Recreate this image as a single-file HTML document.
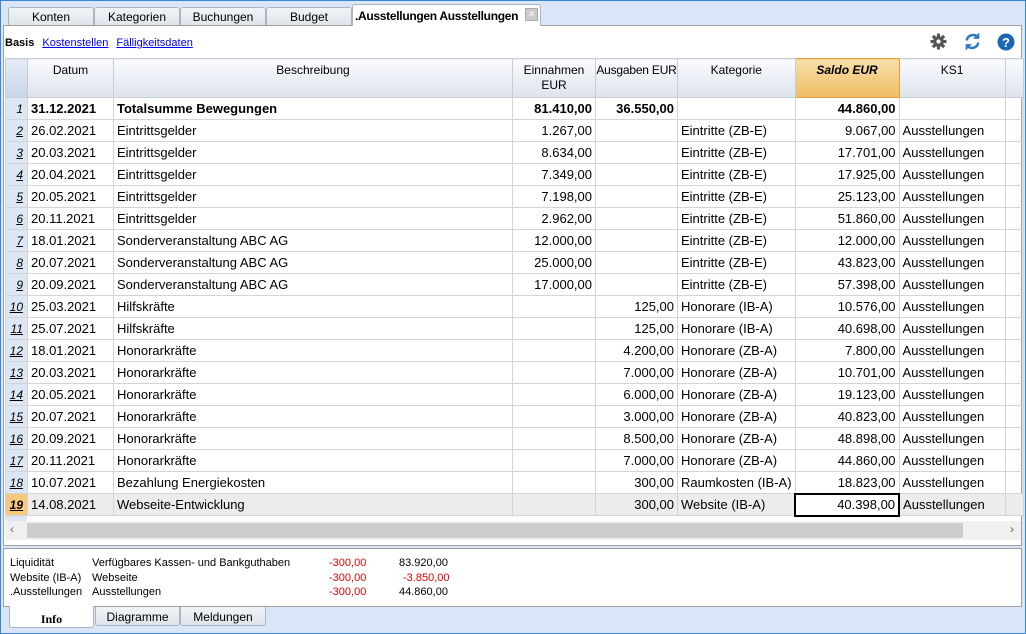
<!DOCTYPE html>
<html><head><meta charset="utf-8"><style>
*{box-sizing:border-box;margin:0;padding:0}
body{width:1026px;height:634px;overflow:hidden;background:#dae6f8;font-family:"Liberation Sans",sans-serif;font-size:12px;color:#000;position:relative}
.frame{position:absolute;left:0;top:0;width:1026px;height:634px;border:1px solid #3a86d0}
.tab{position:absolute;top:7px;height:19px;border:1px solid #a9b4c4;border-bottom:none;border-radius:3px 3px 0 0;background:linear-gradient(#f2f4f7,#dfe3ea);text-align:center;font-size:12px;line-height:18px;white-space:nowrap}
.panel{position:absolute;left:3px;top:25px;width:1019px;height:521px;background:#fff;border:1px solid #a0a0a0}
.links{position:absolute;left:5px;top:37px;font-size:11px}
.links a{color:#0000ee;text-decoration:underline;margin-left:8px}
table{position:absolute;left:5px;top:58px;border-collapse:collapse;table-layout:fixed;font-size:13px}
td{border:1px solid #d4d4d4;height:22px;padding:0 3px;white-space:nowrap;overflow:hidden}
th{height:39px;border:1px solid #c8ccd4;font-weight:normal;vertical-align:top;padding-top:4px;background:linear-gradient(#fafbfd,#dde3ec);font-size:12px;line-height:15px;white-space:nowrap;overflow:hidden}
td.n{background:#dde6f4;text-align:right;font-style:italic;text-decoration:underline;font-size:12px;padding-right:4px}
td.r{text-align:right}
tr.b td{font-weight:bold}
tr.b td.n{font-weight:normal;text-decoration:none}
tr.sel td{background:#ececec}
tr.sel td.n{background:#f7c97c;font-weight:bold}
.info{position:absolute;left:3px;top:548px;width:1019px;height:59px;background:#fff;border:1px solid #a0a0a0;font-size:11px}
.info div{position:absolute;white-space:nowrap}
.red{color:#e00000}
</style></head><body>
<div class="frame"></div>
<div class="tab" style="left:8px;width:86px">Konten</div>
<div class="tab" style="left:94px;width:86px">Kategorien</div>
<div class="tab" style="left:180px;width:86px">Buchungen</div>
<div class="tab" style="left:266px;width:86px">Budget</div>
<div class="tab" style="left:352px;width:189px;top:4px;height:22px;background:#fff;font-weight:bold;font-size:12px;letter-spacing:-0.3px;text-align:left;padding-left:2px;line-height:22px;z-index:2">.Ausstellungen Ausstellungen</div>
<div style="position:absolute;left:525px;top:8px;width:13px;height:13px;background:#ccc;border:1px solid #aaa;color:#fff;font-size:10px;line-height:11px;text-align:center;z-index:3">×</div>
<div class="panel"></div>
<div class="links"><b>Basis</b><a>Kostenstellen</a><a>Fälligkeitsdaten</a></div>
<svg style="position:absolute;left:930px;top:33px" width="17" height="17" viewBox="0 0 16 16"><g fill="#555"><circle cx="8" cy="8" r="5"/><rect x="6.5" y="0.5" width="3" height="15"/><rect x="0.5" y="6.5" width="15" height="3"/><rect x="6.5" y="0.5" width="3" height="15" transform="rotate(45 8 8)"/><rect x="6.5" y="0.5" width="3" height="15" transform="rotate(-45 8 8)"/></g><circle cx="8" cy="8" r="2" fill="#fff"/></svg>
<svg style="position:absolute;left:963px;top:32px" width="19" height="19" viewBox="0 0 18 18" fill="none" stroke="#2e7bc4" stroke-width="2.4"><path d="M3.5 8A6 6 0 0 1 14 5"/><path d="M14.5 10A6 6 0 0 1 4 13"/><path d="M15 1v5h-5" fill="#2e7bc4" stroke-width="1"/><path d="M3 17v-5h5" fill="#2e7bc4" stroke-width="1"/></svg>
<svg style="position:absolute;left:997px;top:33px" width="18" height="18" viewBox="0 0 18 18"><circle cx="9" cy="9" r="8.5" fill="#1c66b8"/><text x="9" y="14" text-anchor="middle" fill="#fff" font-family="Liberation Sans" font-weight="bold" font-size="13">?</text></svg>
<table>
<colgroup><col style="width:22px"><col style="width:86px"><col style="width:399px"><col style="width:83px"><col style="width:82px"><col style="width:116px"><col style="width:104px"><col style="width:106px"><col style="width:18px"></colgroup>
<tr><th style="background:linear-gradient(#e6ecf6,#c9d6ea)"></th><th>Datum</th><th>Beschreibung</th><th>Einnahmen<br>EUR</th><th style="letter-spacing:-0.2px;padding:4px 0 0">Ausgaben EUR</th><th>Kategorie</th><th style="background:linear-gradient(#f8dfac,#f0bc62);border-color:#e0a040;font-weight:bold;font-style:italic">Saldo EUR</th><th>KS1</th><th></th></tr>
<tr class="b"><td class="n">1</td><td>31.12.2021</td><td>Totalsumme Bewegungen</td><td class="r">81.410,00</td><td class="r">36.550,00</td><td></td><td class="r">44.860,00</td><td></td><td></td></tr>
<tr><td class="n">2</td><td>26.02.2021</td><td>Eintrittsgelder</td><td class="r">1.267,00</td><td></td><td>Eintritte (ZB-E)</td><td class="r">9.067,00</td><td>Ausstellungen</td><td></td></tr>
<tr><td class="n">3</td><td>20.03.2021</td><td>Eintrittsgelder</td><td class="r">8.634,00</td><td></td><td>Eintritte (ZB-E)</td><td class="r">17.701,00</td><td>Ausstellungen</td><td></td></tr>
<tr><td class="n">4</td><td>20.04.2021</td><td>Eintrittsgelder</td><td class="r">7.349,00</td><td></td><td>Eintritte (ZB-E)</td><td class="r">17.925,00</td><td>Ausstellungen</td><td></td></tr>
<tr><td class="n">5</td><td>20.05.2021</td><td>Eintrittsgelder</td><td class="r">7.198,00</td><td></td><td>Eintritte (ZB-E)</td><td class="r">25.123,00</td><td>Ausstellungen</td><td></td></tr>
<tr><td class="n">6</td><td>20.11.2021</td><td>Eintrittsgelder</td><td class="r">2.962,00</td><td></td><td>Eintritte (ZB-E)</td><td class="r">51.860,00</td><td>Ausstellungen</td><td></td></tr>
<tr><td class="n">7</td><td>18.01.2021</td><td>Sonderveranstaltung ABC AG</td><td class="r">12.000,00</td><td></td><td>Eintritte (ZB-E)</td><td class="r">12.000,00</td><td>Ausstellungen</td><td></td></tr>
<tr><td class="n">8</td><td>20.07.2021</td><td>Sonderveranstaltung ABC AG</td><td class="r">25.000,00</td><td></td><td>Eintritte (ZB-E)</td><td class="r">43.823,00</td><td>Ausstellungen</td><td></td></tr>
<tr><td class="n">9</td><td>20.09.2021</td><td>Sonderveranstaltung ABC AG</td><td class="r">17.000,00</td><td></td><td>Eintritte (ZB-E)</td><td class="r">57.398,00</td><td>Ausstellungen</td><td></td></tr>
<tr><td class="n">10</td><td>25.03.2021</td><td>Hilfskräfte</td><td></td><td class="r">125,00</td><td>Honorare (IB-A)</td><td class="r">10.576,00</td><td>Ausstellungen</td><td></td></tr>
<tr><td class="n">11</td><td>25.07.2021</td><td>Hilfskräfte</td><td></td><td class="r">125,00</td><td>Honorare (IB-A)</td><td class="r">40.698,00</td><td>Ausstellungen</td><td></td></tr>
<tr><td class="n">12</td><td>18.01.2021</td><td>Honorarkräfte</td><td></td><td class="r">4.200,00</td><td>Honorare (ZB-A)</td><td class="r">7.800,00</td><td>Ausstellungen</td><td></td></tr>
<tr><td class="n">13</td><td>20.03.2021</td><td>Honorarkräfte</td><td></td><td class="r">7.000,00</td><td>Honorare (ZB-A)</td><td class="r">10.701,00</td><td>Ausstellungen</td><td></td></tr>
<tr><td class="n">14</td><td>20.05.2021</td><td>Honorarkräfte</td><td></td><td class="r">6.000,00</td><td>Honorare (ZB-A)</td><td class="r">19.123,00</td><td>Ausstellungen</td><td></td></tr>
<tr><td class="n">15</td><td>20.07.2021</td><td>Honorarkräfte</td><td></td><td class="r">3.000,00</td><td>Honorare (ZB-A)</td><td class="r">40.823,00</td><td>Ausstellungen</td><td></td></tr>
<tr><td class="n">16</td><td>20.09.2021</td><td>Honorarkräfte</td><td></td><td class="r">8.500,00</td><td>Honorare (ZB-A)</td><td class="r">48.898,00</td><td>Ausstellungen</td><td></td></tr>
<tr><td class="n">17</td><td>20.11.2021</td><td>Honorarkräfte</td><td></td><td class="r">7.000,00</td><td>Honorare (ZB-A)</td><td class="r">44.860,00</td><td>Ausstellungen</td><td></td></tr>
<tr><td class="n">18</td><td>10.07.2021</td><td>Bezahlung Energiekosten</td><td></td><td class="r">300,00</td><td>Raumkosten (IB-A)</td><td class="r">18.823,00</td><td>Ausstellungen</td><td></td></tr>
<tr class="sel"><td class="n">19</td><td>14.08.2021</td><td>Webseite-Entwicklung</td><td></td><td class="r">300,00</td><td>Website (IB-A)</td><td class="r" style="background:#fff;border:2px solid #000">40.398,00</td><td>Ausstellungen</td><td></td></tr>
</table>
<div style="position:absolute;left:5px;top:516px;width:22px;height:5px;background:#dde6f4"></div>
<div style="position:absolute;left:5px;top:521px;width:1016px;height:19px;background:#f0f0f0"></div>
<div style="position:absolute;left:27px;top:523px;width:936px;height:15px;background:#cdcdcd"></div>
<div style="position:absolute;left:10px;top:522px;color:#666;font-size:12px">‹</div>
<div style="position:absolute;left:1010px;top:522px;color:#666;font-size:12px">›</div>
<div class="info">
<div style="left:6px;top:8px">Liquidität</div><div style="left:88px;top:8px">Verfügbares Kassen- und Bankguthaben</div><div class="red" style="left:325px;top:8px">-300,00</div><div style="left:395px;top:8px">83.920,00</div>
<div style="left:6px;top:23px">Website (IB-A)</div><div style="left:88px;top:23px">Webseite</div><div class="red" style="left:325px;top:23px">-300,00</div><div class="red" style="left:399px;top:23px">-3.850,00</div>
<div style="left:6px;top:37px">.Ausstellungen</div><div style="left:88px;top:37px">Ausstellungen</div><div class="red" style="left:325px;top:37px">-300,00</div><div style="left:395px;top:37px">44.860,00</div>
</div>
<div class="tab" style="top:606px;left:9px;width:85px;height:22px;background:#fff;border-top:none;border-bottom:1px solid #a9b4c4;border-radius:0 0 3px 3px;font-family:'Liberation Serif',serif;font-weight:bold;font-size:12px;line-height:26px">Info</div>
<div class="tab" style="top:607px;left:95px;width:85px;height:19px;border-top:none;border-bottom:1px solid #a9b4c4;border-radius:0 0 3px 3px;line-height:20px">Diagramme</div>
<div class="tab" style="top:607px;left:180px;width:86px;height:19px;border-top:none;border-bottom:1px solid #a9b4c4;border-radius:0 0 3px 3px;line-height:20px">Meldungen</div>
</body></html>
